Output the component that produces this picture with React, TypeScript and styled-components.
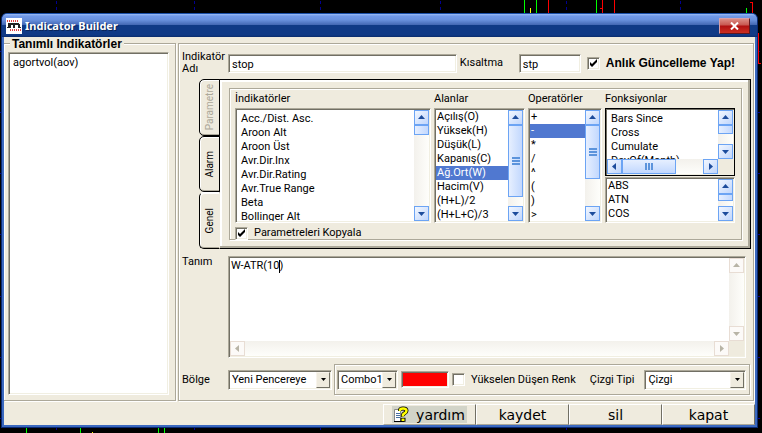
import React from "react";
import styled, { createGlobalStyle, css } from "styled-components";

const face = "#efebde";
const shade = "#aca899";
const dark = "#716f64";

const GlobalStyle = createGlobalStyle`
  * { box-sizing: border-box; }
  html, body { margin: 0; background: #000; }
  body, button, input, select, textarea {
    font-family: Roboto, "Liberation Sans", sans-serif;
    font-size: 11px;
    line-height: 14px;
    color: #000;
  }
  button, input, select, textarea { margin: 0; border-radius: 0; outline: none; }
`;

const sunken = css`
  border: 1px solid;
  border-color: ${shade} #fff #fff ${shade};
  box-shadow: inset 1px 1px 0 ${dark}, inset -1px -1px 0 #f1efe2;
  background: #fff;
`;

const etched = css`
  border: 1px solid ${shade};
  box-shadow: 1px 1px 0 #fff, inset 1px 1px 0 #fff;
`;

const Desktop = styled.div`
  position: relative;
  min-height: 100vh;
  padding: 13px 4px 5px 1px;
  display: flex;
  background: #000;
`;

const ChartBackdrop = styled.svg`
  position: absolute;
  left: 0;
  top: 0;
`;

const Window = styled.main`
  position: relative;
  flex: 1;
  display: flex;
  flex-direction: column;
  min-width: 0;
  border-radius: 6px 6px 0 0;
  overflow: hidden;
  border: 1px solid #0a2a74;
  border-top-color: #1c50a8;
  background: #3b69bf;
`;

const TitleBar = styled.header`
  display: flex;
  align-items: center;
  gap: 3px;
  height: 23px;
  padding: 0 7px 0 4px;
  background: linear-gradient(#9dbdf5 0, #7199e8 2px, #6890dc 6px, #4266b2 11px, #103a86 11px, #103a86 21px, #0a2c6c 23px);
`;

const Title = styled.h1`
  flex: 1;
  margin: 0;
  font: bold 11px/18px "Noto Sans", sans-serif;
  color: #fff;
  text-shadow: 1px 1px 0 #0a2458;
`;

const CloseButton = styled.button`
  display: flex;
  align-items: center;
  justify-content: center;
  width: 31px;
  height: 16px;
  padding: 0;
  border: 1px solid #8a3038;
  border-color: #d8a0a8 #601820 #601820 #d8a0a8;
  background: linear-gradient(#dc8c84 0, #c85850 6px, #b01010 7px, #cc3022 100%);
`;

const Body = styled.div`
  flex: 1;
  display: flex;
  flex-direction: column;
  margin: 0 2px 2px;
  background: ${face};
`;

const Columns = styled.div`
  flex: 1;
  display: flex;
  gap: 2px;
  padding: 6px 1px 2px 0;
`;

const Saved = styled.section`
  position: relative;
  display: flex;
  width: 172px;
  padding: 8px 6px 5px 4px;
  ${etched}
  border-left: 0;
`;

const SavedTitle = styled.h2`
  position: absolute;
  left: 6px;
  top: -7px;
  margin: 0;
  padding: 0 2px;
  background: ${face};
  font: bold 12px/14px "Liberation Sans", sans-serif;
`;

const Editor = styled.form`
  flex: 1;
  min-width: 0;
  display: flex;
  flex-direction: column;
  padding: 5px 2px 4px 3px;
  ${etched}
`;

const NameRow = styled.div`
  display: flex;
  align-items: center;
  height: 30px;
  padding: 0 16px 2px 0;
`;

const Label = styled.label<{ $width?: number }>`
  flex: none;
  width: ${(p) => (p.$width ? `${p.$width}px` : "auto")};
  line-height: 12px;
`;

const ShortLabel = styled(Label)`
  padding-left: 3px;
`;

const TextBox = styled.input<{ $width?: number }>`
  ${sunken}
  height: 19px;
  min-width: 0;
  padding: 2px 3px 0;
  ${(p) => (p.$width ? `width: ${p.$width}px;` : "flex: 1;")}
`;

const CheckInput = styled.input`
  ${sunken}
  appearance: none;
  flex: none;
  width: 13px;
  height: 13px;
  &:checked {
    background: #fff url("data:image/svg+xml,%3Csvg xmlns='http://www.w3.org/2000/svg' viewBox='0 0 11 11'%3E%3Cpath d='M2 4v3l2 2 5-5V1L4 6z'/%3E%3C/svg%3E") center / 11px 11px;
  }
`;

const CheckLabel = styled.label<{ $strong?: boolean }>`
  display: flex;
  align-items: center;
  gap: 6px;
  white-space: nowrap;
  ${(p) => p.$strong && `margin-left: 6px; font: bold 12px/14px "Liberation Sans", sans-serif;`}
`;

const Tabbed = styled.div`
  display: flex;
  height: 170px;
  margin-left: 17px;
`;

const TabStrip = styled.div`
  display: flex;
  flex-direction: column;
  width: 21px;
  margin-right: -1px;
  z-index: 1;
`;

const Tab = styled.button<{ $active?: boolean }>`
  flex: 1;
  display: flex;
  align-items: center;
  justify-content: center;
  padding: 0;
  border: 1px solid #000;
  border-right-color: ${(p) => (p.$active ? face : "#000")};
  border-top-color: ${(p) => (p.$active ? "#fff" : "#000")};
  border-radius: 5px 0 0 5px;
  background: ${face};
  box-shadow: inset 1px 1px 0 #fff, inset 0 -1px 0 ${shade};
  font-size: 10px;
  &:disabled { color: ${shade}; }
`;

const TabText = styled.span`
  writing-mode: vertical-rl;
  rotate: 180deg;
`;

const TabPanel = styled.div`
  flex: 1;
  min-width: 0;
  display: flex;
  padding: 8px;
  border: 1px solid #000;
  background: ${face};
  box-shadow: inset -2px -2px 0 ${shade}, inset 2px 2px 0 #fff;
`;

const Picker = styled.div`
  flex: 1;
  min-width: 0;
  display: flex;
  flex-direction: column;
  gap: 3px;
  padding: 3px 6px 2px 5px;
  margin-left: 1px;
  ${etched}
`;

const Lists = styled.div`
  display: grid;
  grid-template-columns: 196fr 91fr 74fr 130fr;
  gap: 3px;
`;

const ListColumn = styled.div`
  display: flex;
  flex-direction: column;
  gap: 1px;
  min-width: 0;
`;

const Caption = styled.div`
  height: 15px;
`;

const ListFrame = styled.div<{ $height?: number; $focused?: boolean }>`
  ${sunken}
  position: relative;
  display: flex;
  flex: 1;
  padding: 1px;
  min-width: 0;
  ${(p) => p.$height && `flex-basis: ${p.$height}px; height: ${p.$height}px;`}
  ${(p) => p.$focused && "flex-grow: 0; flex-shrink: 0; outline: 1px solid #000; outline-offset: -1px;"}
`;

const ListBox = styled.ul<{ $inset?: number }>`
  flex: 1;
  min-width: 0;
  margin: 0;
  padding: ${(p) => (p.$inset ? "2px 0 0" : "0")};
  overflow: hidden;
  list-style: none;
  li { padding-left: ${(p) => p.$inset || 1}px; white-space: nowrap; height: 14px; }
  li[aria-selected="true"] { background: #5078d0; color: #fff; }
`;

const ScrollTrack = styled.div<{ $across?: boolean }>`
  flex: none;
  display: flex;
  flex-direction: ${(p) => (p.$across ? "row" : "column")};
  ${(p) => (p.$across ? "height: 15px;" : "width: 15px;")}
  background: linear-gradient(${(p) => (p.$across ? "180deg" : "90deg")}, #f3f1ec, #fefefb);
`;

const ScrollButton = styled.button<{ $muted?: boolean }>`
  flex: none;
  display: flex;
  align-items: center;
  justify-content: center;
  width: 15px;
  height: 15px;
  padding: 0;
  border: 1px solid ${(p) => (p.$muted ? "#e8ddd4" : "#6ca4f4")};
  background: ${(p) => (p.$muted ? "#fcfaf8" : "linear-gradient(135deg, #f2f7ff, #c0d6fc)")};
`;

const Space = styled.div<{ $grow: number }>`
  flex: ${(p) => p.$grow} 1 0;
`;

const Thumb = styled.div<{ $grow: number; $across?: boolean }>`
  flex: ${(p) => p.$grow} 1 0;
  display: flex;
  align-items: center;
  justify-content: center;
  min-height: 6px;
  overflow: hidden;
  border: 1px solid #6ca4f4;
  background: linear-gradient(${(p) => (p.$across ? "180deg" : "90deg")}, #e6efff, #c2d8fe);
`;

const arrows = {
  up: "M0 5h7L3.5 1z",
  down: "M0 2h7L3.5 6z",
  left: "M5 0v7L1 3.5z",
  right: "M2 0v7l4-3.5z",
};

function Arrow({ to, color }: { to: keyof typeof arrows; color: string }) {
  return (
    <svg width="7" height="7" viewBox="0 0 7 7" aria-hidden="true">
      <path d={arrows[to]} fill={color} />
    </svg>
  );
}

type ScrollProps = { across?: boolean; muted?: boolean; thumb?: number; rest?: number; grip?: boolean };

function Scroll({ across, muted, thumb = 0, rest = 1, grip }: ScrollProps) {
  const color = muted ? "#b8b4a6" : "#1c4c9c";
  return (
    <ScrollTrack $across={across}>
      <ScrollButton type="button" $muted={muted} aria-label={across ? "Sola" : "Yukarı"}>
        <Arrow to={across ? "left" : "up"} color={color} />
      </ScrollButton>
      {thumb > 0 && (
        <Thumb $grow={thumb} $across={across}>
          {grip && (
            <svg width="8" height="11" viewBox={across ? "0 0 8 11" : "0 0 8 11"} aria-hidden="true">
              <path
                d={across ? "M1 2v7M4 2v7M7 2v7" : "M0 2h8M0 5h8M0 8h8"}
                stroke="#5c94dc"
                strokeWidth="2"
                shapeRendering="crispEdges"
              />
            </svg>
          )}
        </Thumb>
      )}
      <Space $grow={rest} />
      <ScrollButton type="button" $muted={muted} aria-label={across ? "Sağa" : "Aşağı"}>
        <Arrow to={across ? "right" : "down"} color={color} />
      </ScrollButton>
    </ScrollTrack>
  );
}

function Items({ label, items, selected, inset }: { label: string; items: string[]; selected?: string; inset?: number }) {
  return (
    <ListBox role="listbox" aria-label={label} tabIndex={0} $inset={inset}>
      {items.map((item) => (
        <li key={item} role="option" aria-selected={item === selected}>{item}</li>
      ))}
    </ListBox>
  );
}

const Stack = styled.div`
  flex: 1;
  display: flex;
  flex-direction: column;
  min-width: 0;
  min-height: 0;
`;

const ScrollCorner = styled.div`
  display: flex;
  flex-direction: column;
  padding-bottom: 15px;
  background: ${face};
  > * { flex: 1; }
`;

const DefinitionRow = styled.div`
  display: flex;
  align-items: flex-start;
  padding: 7px 5px 0 0;
`;

const Definition = styled.textarea`
  flex: 1;
  min-height: 0;
  width: 100%;
  padding: 1px;
  border: 0;
  resize: none;
  overflow: hidden;
  background: #fff;
`;

const Caret = styled.span`
  position: absolute;
  left: 50px;
  top: 3px;
  width: 1px;
  height: 13px;
  background: #000;
`;

const StyleRow = styled.div`
  display: flex;
  align-items: center;
  padding: 6px 1px 0 0;
`;

const StyleGroup = styled.div`
  ${etched}
  flex: 1;
  display: flex;
  align-items: center;
  height: 31px;
  margin-left: 2px;
  padding: 0 3px 0 2px;
`;

const ComboFrame = styled.div<{ $width?: number }>`
  ${sunken}
  position: relative;
  display: flex;
  height: 20px;
  padding: 2px;
  ${(p) => (p.$width ? `width: ${p.$width}px;` : "flex: 1;")}
`;

const ComboSelect = styled.select`
  appearance: none;
  flex: 1;
  min-width: 0;
  padding: 0 0 0 1px;
  border: 0;
  background: transparent;
`;

const ComboArrow = styled.span`
  position: absolute;
  right: 1px;
  top: 1px;
  bottom: 1px;
  width: 14px;
  display: flex;
  align-items: center;
  justify-content: center;
  border: 1px solid;
  border-color: #f8f4ec ${dark} ${dark} #f8f4ec;
  background: ${face};
  pointer-events: none;
`;

function Combo({ id, label, value, width }: { id: string; label?: string; value: string; width?: number }) {
  return (
    <ComboFrame $width={width}>
      <ComboSelect id={id} aria-label={label} defaultValue={value}>
        <option>{value}</option>
      </ComboSelect>
      <ComboArrow>
        <svg width="5" height="3" viewBox="0 0 5 3" aria-hidden="true"><path d="M0 0h5L2.5 3z" /></svg>
      </ComboArrow>
    </ComboFrame>
  );
}

const ColorSwatch = styled.button`
  ${sunken}
  width: 48px;
  height: 17px;
  margin: 0 3px;
  background: #f00;
`;

const TypeLabel = styled(Label)`
  margin: 0 10px 0 14px;
`;

const Actions = styled.footer`
  display: flex;
  justify-content: flex-end;
  padding-top: 1px;
`;

const ActionButton = styled.button`
  display: flex;
  align-items: center;
  justify-content: center;
  width: 93px;
  height: 21px;
  padding: 0;
  border: 1px solid;
  border-color: #fff ${dark} ${shade} #fff;
  background: ${face};
  font: 14px/16px "DejaVu Sans", sans-serif;
`;

const Highlight = styled.span`
  display: flex;
  align-items: center;
  gap: 7px;
  height: 17px;
  padding: 0 2px 0 1px;
  background: #d2d4c8;
`;

const ticks = [56, 194, 320, 440, 566, 680];

function Backdrop() {
  return (
    <ChartBackdrop width="762" height="433" viewBox="0 0 762 433" shapeRendering="crispEdges" aria-hidden="true">
      <g fill="#000090">
        {ticks.map((x) => (
          <path key={x} d={`M${x} 1h1v3h-1zM${x} 7h1v3h-1zM${x} 427h1v3h-1z`} />
        ))}
        {[51, 112, 173, 234, 296, 357, 418].map((y) => (
          <path key={y} d={`M0 ${y}h2v1h-2zM758 ${y}h2v1h-2z`} />
        ))}
      </g>
      <path fill="#0f0" d="M524 0h1v13h-1zM536 0h1v13h-1zM596 0h1v13h-1zM746 8h1v5h-1zM26 428h1v5h-1zM80 428h1v5h-1zM158 428h1v5h-1zM164 428h1v5h-1z" />
      <path fill="#ff0" d="M530 8h1v5h-1zM92 432h1v1h-1z" />
      <path fill="#f00" d="M548 0h1v13h-1zM602 0h1v13h-1zM600 8h2v1h-2zM614 0h1v13h-1zM752 2h1v11h-1zM750 2h2v1h-2zM758 33h1v30h-1zM758 63h3v1h-3z" />
    </ChartBackdrop>
  );
}

function AppIcon() {
  return (
    <svg width="16" height="16" viewBox="0 0 16 16" shapeRendering="crispEdges" aria-hidden="true">
      <path fill="#fff" d="M0 0h16v16H0z" />
      <path stroke="#e04040" strokeDasharray="1 1" d="M1 2.5h11M1 3.5h11M4 11.5h11M4 12.5h11" />
      <path fill="#222" d="M2 5h11v1h1v3h1v1h-3V7H9v3H7V7H5v3H1V9h1z" />
    </svg>
  );
}

function HelpIcon() {
  return (
    <svg width="16" height="17" viewBox="0 0 16 17" aria-hidden="true">
      <path d="M1.500 3.500h6v12h-6z" fill="#fff" stroke="#888" />
      <path d="M1 15.500h10" stroke="#000" />
      <path d="M3 7.500h4M3 9.500h4M3 11.500h4" stroke="#4870a0" />
      <path d="M7 5V4Q7.500 2.500 10 2.500q3.500 0 3.500 2.300 0 1.500-2 2.500T10 10.500" fill="none" stroke="#000" strokeWidth="4" />
      <path d="M7.500 13.800h5" stroke="#000" strokeWidth="4" />
      <path d="M7 5V4Q7.500 2.500 10 2.500q3.500 0 3.500 2.300 0 1.500-2 2.500T10 10.500" fill="none" stroke="#ff0" strokeWidth="2.500" />
      <path d="M8.500 13.800h3" stroke="#ff0" strokeWidth="2.500" />
    </svg>
  );
}

const indicators = ["Acc./Dist. Asc.", "Aroon Alt", "Aroon Üst", "Avr.Dir.Inx", "Avr.Dir.Rating", "Avr.True Range", "Beta", "Bollinger Alt"];
const fields = ["Açılış(O)", "Yüksek(H)", "Düşük(L)", "Kapanış(C)", "Ağ.Ort(W)", "Hacim(V)", "(H+L)/2", "(H+L+C)/3"];
const operators = ["+", "-", "*", "/", "^", "(", ")", ">"];

export default function App() {
  return (
    <Desktop>
      <GlobalStyle />
      <Backdrop />
      <Window>
        <TitleBar>
          <AppIcon />
          <Title>Indicator Builder</Title>
          <CloseButton type="button" aria-label="Kapat">
            <svg width="9" height="8" viewBox="0 0 9 8" aria-hidden="true">
              <path d="M1 .5l7 7M8 .5l-7 7" stroke="#fff" strokeWidth="2" />
            </svg>
          </CloseButton>
        </TitleBar>
        <Body>
          <Columns>
            <Saved>
              <SavedTitle>Tanımlı Indikatörler</SavedTitle>
              <ListFrame>
                <Items label="Tanımlı Indikatörler" items={["agortvol(aov)"]} inset={3} />
              </ListFrame>
            </Saved>
            <Editor>
              <NameRow>
                <Label htmlFor="name" $width={46}>Indikatör<br />Adı</Label>
                <TextBox id="name" defaultValue="stop" />
                <ShortLabel htmlFor="short" $width={62}>Kısaltma</ShortLabel>
                <TextBox id="short" defaultValue="stp" $width={62} />
                <CheckLabel $strong>
                  <CheckInput type="checkbox" defaultChecked />
                  Anlık Güncelleme Yap!
                </CheckLabel>
              </NameRow>
              <Tabbed>
                <TabStrip role="tablist">
                  <Tab type="button" role="tab" disabled><TabText>Parametre</TabText></Tab>
                  <Tab type="button" role="tab"><TabText>Alarm</TabText></Tab>
                  <Tab type="button" role="tab" aria-selected $active><TabText>Genel</TabText></Tab>
                </TabStrip>
                <TabPanel role="tabpanel">
                  <Picker>
                    <Lists>
                      <ListColumn>
                        <Caption>İndikatörler</Caption>
                        <ListFrame $height={114}>
                          <Items label="İndikatörler" items={indicators} inset={4} />
                          <Scroll thumb={8} rest={74} />
                        </ListFrame>
                      </ListColumn>
                      <ListColumn>
                        <Caption>Alanlar</Caption>
                        <ListFrame $height={114}>
                          <Items label="Alanlar" items={fields} selected="Ağ.Ort(W)" />
                          <Scroll thumb={73} rest={9} grip />
                        </ListFrame>
                      </ListColumn>
                      <ListColumn>
                        <Caption>Operatörler</Caption>
                        <ListFrame $height={114}>
                          <Items label="Operatörler" items={operators} selected="-" />
                          <Scroll thumb={54} rest={28} grip />
                        </ListFrame>
                      </ListColumn>
                      <ListColumn>
                        <Caption>Fonksiyonlar</Caption>
                        <ListFrame $height={68} $focused>
                          <Stack>
                            <Items label="Fonksiyonlar" items={["Bars Since", "Cross", "Cumulate", "DayOf(Month)"]} inset={4} />
                            <Scroll across thumb={53} rest={27} grip />
                          </Stack>
                          <ScrollCorner><Scroll thumb={7} rest={11} /></ScrollCorner>
                        </ListFrame>
                        <ListFrame>
                          <Items label="Matematik" items={["ABS", "ATN", "COS"]} />
                          <Scroll thumb={6} rest={6} />
                        </ListFrame>
                      </ListColumn>
                    </Lists>
                    <CheckLabel>
                      <CheckInput type="checkbox" defaultChecked />
                      Parametreleri Kopyala
                    </CheckLabel>
                  </Picker>
                </TabPanel>
              </Tabbed>
              <DefinitionRow>
                <Label htmlFor="definition" $width={46}>Tanım</Label>
                <ListFrame $height={102}>
                  <Stack>
                    <Definition id="definition" defaultValue="W-ATR(10)" spellCheck={false} />
                    <Scroll across muted />
                  </Stack>
                  <ScrollCorner><Scroll muted /></ScrollCorner>
                  <Caret />
                </ListFrame>
              </DefinitionRow>
              <StyleRow>
                <Label htmlFor="region" $width={46}>Bölge</Label>
                <Combo id="region" value="Yeni Pencereye" width={104} />
                <StyleGroup>
                  <Combo id="preset" label="Combo" value="Combo1" width={61} />
                  <ColorSwatch type="button" aria-label="Renk" />
                  <CheckLabel>
                    <CheckInput type="checkbox" />
                    Yükselen Düşen Renk
                  </CheckLabel>
                  <TypeLabel htmlFor="line">Çizgi Tipi</TypeLabel>
                  <Combo id="line" value="Çizgi" />
                </StyleGroup>
              </StyleRow>
            </Editor>
          </Columns>
          <Actions>
            <ActionButton type="button"><Highlight><HelpIcon />yardım</Highlight></ActionButton>
            <ActionButton type="button">kaydet</ActionButton>
            <ActionButton type="button">sil</ActionButton>
            <ActionButton type="button">kapat</ActionButton>
          </Actions>
        </Body>
      </Window>
    </Desktop>
  );
}
